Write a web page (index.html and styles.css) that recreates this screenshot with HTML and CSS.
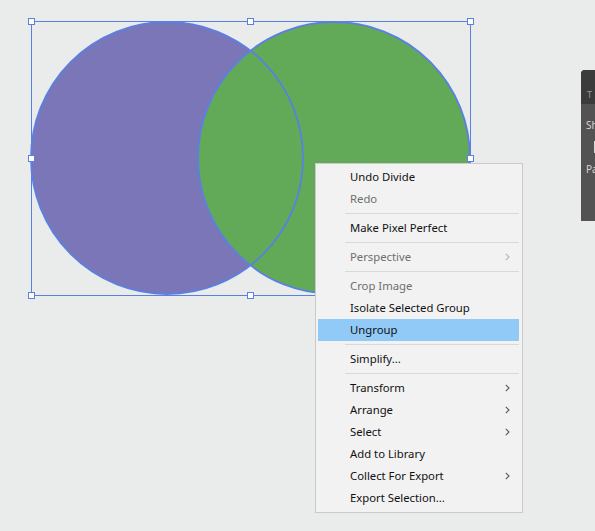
FILE: index.html
```html
<!DOCTYPE html>
<html>
<head>
<meta charset="utf-8">
<link rel="stylesheet" href="styles.css">
</head>
<body>
<div class="stage">
  <svg class="art" width="595" height="531" viewBox="0 0 595 531">
    <circle cx="167" cy="158" r="136" fill="#7a76b8"/>
    <circle cx="334" cy="158" r="136" fill="#62a958"/>
    <circle cx="167" cy="158" r="136" fill="none" stroke="#5a80e2" stroke-width="1.8"/>
    <circle cx="334" cy="158" r="136" fill="none" stroke="#5a80e2" stroke-width="1.8"/>
    <rect x="31.5" y="21.5" width="439" height="274" fill="none" stroke="#5a80e2" stroke-width="1"/>
    <g fill="#ffffff" stroke="#5a80e2" stroke-width="1">
      <rect x="28.5" y="18.5" width="6" height="6"/>
      <rect x="247.5" y="18.5" width="6" height="6"/>
      <rect x="467.5" y="18.5" width="6" height="6"/>
      <rect x="28.5" y="155.5" width="6" height="6"/>
      <rect x="467.5" y="155.5" width="6" height="6"/>
      <rect x="28.5" y="292.5" width="6" height="6"/>
      <rect x="247.5" y="292.5" width="6" height="6"/>
      <rect x="467.5" y="292.5" width="6" height="6"/>
    </g>
  </svg>

  <div class="panel">
    <div class="panel-head"><span class="panel-tab">T</span></div>
    <div class="panel-body">
      <div class="panel-label">Sh</div>
      <div class="panel-swatch"></div>
      <div class="panel-label">Pa</div>
    </div>
  </div>

  <div class="menu">
    <div class="item">Undo Divide</div>
    <div class="item disabled">Redo</div>
    <div class="sep"></div>
    <div class="item">Make Pixel Perfect</div>
    <div class="sep"></div>
    <div class="item disabled">Perspective<svg class="chev" width="5" height="8" viewBox="0 0 5 8"><polyline points="0.8,0.8 4,4 0.8,7.2" fill="none" stroke="currentColor" stroke-width="1.1"/></svg></div>
    <div class="sep"></div>
    <div class="item disabled">Crop Image</div>
    <div class="item">Isolate Selected Group</div>
    <div class="item active">Ungroup</div>
    <div class="sep"></div>
    <div class="item">Simplify...</div>
    <div class="sep"></div>
    <div class="item">Transform<svg class="chev" width="5" height="8" viewBox="0 0 5 8"><polyline points="0.8,0.8 4,4 0.8,7.2" fill="none" stroke="currentColor" stroke-width="1.1"/></svg></div>
    <div class="item">Arrange<svg class="chev" width="5" height="8" viewBox="0 0 5 8"><polyline points="0.8,0.8 4,4 0.8,7.2" fill="none" stroke="currentColor" stroke-width="1.1"/></svg></div>
    <div class="item">Select<svg class="chev" width="5" height="8" viewBox="0 0 5 8"><polyline points="0.8,0.8 4,4 0.8,7.2" fill="none" stroke="currentColor" stroke-width="1.1"/></svg></div>
    <div class="item">Add to Library</div>
    <div class="item">Collect For Export<svg class="chev" width="5" height="8" viewBox="0 0 5 8"><polyline points="0.8,0.8 4,4 0.8,7.2" fill="none" stroke="currentColor" stroke-width="1.1"/></svg></div>
    <div class="item">Export Selection...</div>
  </div>
</div>
</body>
</html>
```
FILE: styles.css
```css
html, body {
  margin: 0;
  padding: 0;
  background: #eaebeb;
  overflow: hidden;
}

.stage {
  position: relative;
  width: 595px;
  height: 531px;
  overflow: hidden;
}

.art {
  position: absolute;
  left: 0;
  top: 0;
  display: block;
}

.panel {
  position: absolute;
  left: 581px;
  top: 70px;
  width: 14px;
  height: 151px;
  background: #535353;
  border-top-left-radius: 4px;
  overflow: hidden;
  font-family: "Noto Sans", "Open Sans", sans-serif;
  font-size: 10px;
  color: #d6d6d6;
}

.panel-head {
  height: 34px;
  background: #3b3b3b;
  display: flex;
  align-items: flex-end;
}

.panel-tab {
  display: block;
  padding: 0 0 2px 6px;
  height: 14px;
  line-height: 14px;
  color: #9a9a9a;
  font-size: 9px;
}

.panel-body {
  display: flex;
  flex-direction: column;
  padding: 14px 0 0 5px;
}

.panel-label {
  height: 14px;
  line-height: 14px;
  white-space: nowrap;
}

.panel-swatch {
  width: 6px;
  height: 12px;
  margin: 9px 0 9px 8px;
  background: #d8d8d8;
}

.menu {
  position: absolute;
  left: 315px;
  top: 163px;
  width: 201px;
  padding: 2px 3px 3px 2px;
  background: #f2f2f2;
  border: 1px solid #cacaca;
  font-family: "Noto Sans", "Open Sans", sans-serif;
  font-size: 11.3px;
  color: #111111;
}

.item {
  height: 22px;
  display: flex;
  align-items: center;
  justify-content: space-between;
  padding: 0 9px 0 32px;
  line-height: 22px;
}

.item.disabled {
  color: #6e6e6e;
}

.item.disabled .chev {
  color: #b4b4b4;
}

.item.active {
  background: #91c9f7;
}

.chev {
  display: block;
  color: #5a5a5a;
}

.sep {
  height: 1px;
  margin: 3px 0 3px 27px;
  background: #d9d9d9;
}
```
